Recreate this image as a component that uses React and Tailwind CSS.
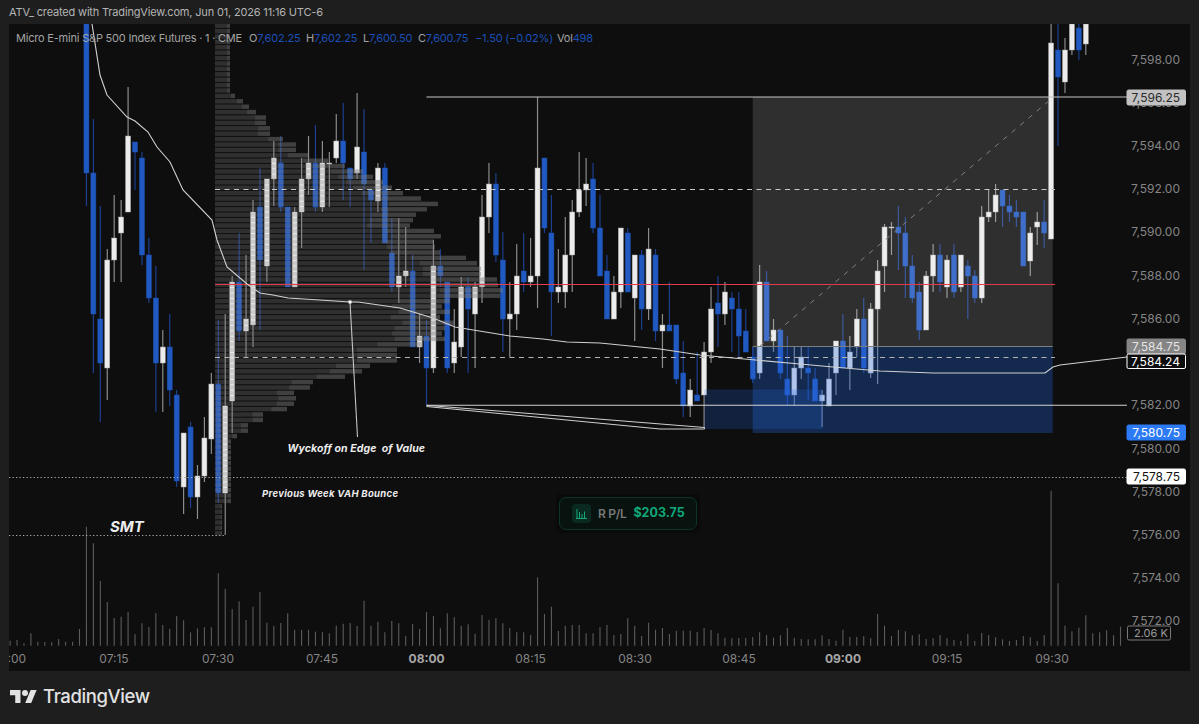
import React from 'react';

const xOf = (i) => 426.5 + 6.94 * i;

// [bar, wick top, body top, body bottom, wick low, colour]
const candles = [
    [-49, 24, 24, 173, 206, 'b'], [-48, 119, 173, 314, 373, 'b'], [-47, 206, 319, 363, 422, 'b'], [-46, 249, 260, 368, 400, 'w'],
    [-45, 195, 238, 260, 282, 'w'], [-44, 200, 217, 233, 282, 'w'], [-43, 87, 136, 212, 212, 'w'], [-42, 142, 142, 152, 190, 'b'],
    [-41, 152, 158, 255, 265, 'b'], [-40, 238, 255, 298, 303, 'b'], [-39, 266, 298, 363, 412, 'b'], [-38, 330, 347, 363, 412, 'w'],
    [-37, 314, 347, 390, 406, 'b'], [-36, 390, 395, 481, 487, 'b'], [-35, 433, 433, 487, 514, 'w'], [-34, 422, 427, 497, 508, 'b'],
    [-33, 465, 476, 497, 519, 'w'], [-32, 417, 438, 476, 482, 'w'], [-31, 373, 384, 439, 454, 'w'], [-30, 320, 384, 493, 503, 'b'],
    [-29, 314, 406, 493, 535, 'w'], [-28, 276, 282, 401, 433, 'w'], [-27, 233, 282, 331, 341, 'b'], [-26, 255, 319, 331, 357, 'w'],
    [-25, 200, 212, 325, 347, 'w'], [-24, 168, 207, 260, 330, 'b'], [-23, 179, 179, 266, 282, 'w'], [-22, 141, 158, 179, 206, 'w'],
    [-21, 136, 163, 207, 212, 'b'], [-20, 207, 207, 287, 287, 'b'], [-19, 207, 212, 287, 287, 'w'], [-18, 158, 179, 212, 248, 'w'],
    [-17, 136, 163, 179, 195, 'w'], [-16, 125, 163, 207, 212, 'b'], [-15, 141, 163, 207, 212, 'w'], [-14, 152, 163, 164, 207, 'w'],
    [-13, 114, 141, 158, 163, 'w'], [-12, 103, 141, 163, 200, 'b'], [-11, 168, 168, 179, 207, 'b'], [-10, 93, 147, 173, 179, 'w'],
    [-9, 109, 152, 184, 270, 'b'], [-8, 190, 190, 200, 243, 'b'], [-7, 163, 168, 201, 212, 'w'], [-6, 163, 168, 243, 243, 'b'],
    [-5, 218, 253, 287, 292, 'b'], [-4, 218, 276, 287, 303, 'w'], [-3, 227, 271, 276, 287, 'w'], [-2, 255, 271, 347, 347, 'b'],
    [-1, 314, 336, 347, 363, 'w'], [0, 320, 336, 368, 405, 'b'], [1, 240, 266, 368, 373, 'w'], [2, 249, 266, 276, 287, 'b'],
    [3, 282, 282, 368, 373, 'b'], [4, 309, 342, 363, 373, 'w'], [5, 277, 287, 347, 357, 'w'], [6, 277, 287, 309, 373, 'b'],
    [7, 282, 287, 314, 368, 'w'], [8, 195, 217, 287, 303, 'w'], [9, 163, 184, 217, 233, 'w'], [10, 173, 184, 255, 262, 'b'],
    [11, 232, 260, 319, 352, 'b'], [12, 282, 314, 319, 357, 'w'], [13, 244, 276, 314, 330, 'w'], [14, 233, 271, 282, 292, 'b'],
    [15, 238, 276, 282, 287, 'w'], [16, 97, 168, 276, 308, 'w'], [17, 158, 158, 228, 233, 'b'], [18, 195, 233, 292, 336, 'b'],
    [19, 249, 287, 292, 303, 'w'], [20, 217, 255, 292, 308, 'w'], [21, 200, 212, 255, 292, 'w'], [22, 152, 190, 212, 217, 'w'],
    [23, 158, 184, 190, 206, 'w'], [24, 163, 179, 228, 233, 'b'], [25, 195, 228, 276, 276, 'b'], [26, 255, 271, 319, 319, 'b'],
    [27, 276, 292, 319, 319, 'w'], [28, 228, 228, 292, 308, 'w'], [29, 228, 233, 292, 292, 'b'], [30, 255, 255, 298, 341, 'w'],
    [31, 250, 255, 309, 330, 'b'], [32, 228, 249, 309, 320, 'w'], [33, 249, 255, 331, 341, 'b'], [34, 314, 325, 331, 368, 'w'],
    [35, 282, 325, 331, 331, 'b'], [36, 325, 325, 379, 384, 'b'], [37, 341, 373, 406, 417, 'b'], [38, 379, 390, 406, 417, 'w'],
    [39, 352, 395, 401, 401, 'b'], [40, 342, 352, 395, 428, 'w'], [41, 287, 309, 352, 363, 'w'], [42, 276, 303, 314, 347, 'b'],
    [43, 282, 292, 314, 325, 'w'], [44, 292, 298, 309, 352, 'b'], [45, 292, 309, 336, 357, 'b'], [46, 309, 331, 352, 352, 'b'],
    [47, 347, 357, 379, 383, 'b'], [48, 265, 282, 373, 379, 'w'], [49, 271, 282, 341, 341, 'b'], [50, 319, 330, 341, 352, 'w'],
    [51, 330, 330, 373, 379, 'b'], [52, 336, 379, 395, 406, 'b'], [53, 347, 368, 395, 406, 'w'], [54, 347, 357, 368, 379, 'w'],
    [55, 347, 368, 373, 400, 'b'], [56, 368, 379, 401, 401, 'b'], [57, 390, 395, 401, 427, 'w'], [58, 363, 379, 406, 406, 'w'],
    [59, 341, 341, 373, 395, 'w'], [60, 314, 341, 368, 368, 'b'], [61, 336, 352, 368, 390, 'w'], [62, 309, 319, 347, 357, 'w'],
    [63, 298, 319, 368, 373, 'b'], [64, 303, 309, 373, 378, 'w'], [65, 260, 271, 309, 384, 'w'], [66, 224, 227, 266, 292, 'w'],
    [67, 222, 227, 228, 255, 'w'], [68, 206, 227, 233, 270, 'b'], [69, 217, 233, 266, 298, 'b'], [70, 255, 266, 298, 303, 'b'],
    [71, 282, 292, 330, 340, 'b'], [72, 271, 276, 330, 330, 'w'], [73, 244, 255, 276, 292, 'w'], [74, 244, 255, 282, 292, 'b'],
    [75, 255, 260, 287, 298, 'w'], [76, 244, 255, 292, 298, 'b'], [77, 255, 255, 287, 292, 'w'], [78, 260, 266, 276, 319, 'b'],
    [79, 270, 276, 298, 303, 'b'], [80, 206, 217, 298, 303, 'w'], [81, 190, 212, 217, 222, 'w'], [82, 184, 195, 212, 222, 'w'],
    [83, 190, 190, 206, 227, 'b'], [84, 195, 206, 212, 222, 'b'], [85, 200, 212, 217, 227, 'b'], [86, 212, 212, 266, 266, 'b'],
    [87, 227, 233, 261, 276, 'w'], [88, 212, 222, 227, 245, 'w'], [89, 200, 222, 233, 248, 'b'], [90, 24, 43, 239, 239, 'w'],
    [91, 24, 50, 77, 146, 'b'], [92, 38, 50, 82, 93, 'w'], [93, 24, 24, 50, 55, 'w'], [94, 24, 28, 50, 60, 'b'],
    [95, 24, 24, 44, 55, 'w'],
];

// right edge of each volume profile row, top to bottom
const profile = [
    230, 230, 230, 230, 230, 230, 230, 230, 230, 230, 230, 230, 230, 235, 243, 249, 256, 266, 266, 270, 270, 283, 296, 296,
    308, 328, 345, 363, 373, 383, 392, 403, 421, 438, 427, 416, 413, 410, 434, 441, 434, 435, 440, 466, 477, 481, 481, 497,
    498, 503, 500, 450, 442, 450, 440, 455, 445, 442, 445, 423, 397, 397, 397, 370, 362, 345, 313, 310, 294, 296, 294, 287,
    263, 263, 248, 248, 237, 231, 231, 231, 231, 231, 231, 231, 231, 231, 231, 231, 231, 222, 222, 222, 222, 222, 222,
];

// top of each volume bar in crop units (y = 480 + top / 3), from bar -60
const volume = [
    482, 480, 490, 460, 485, 486, 487, 477, 485, 485, 447, 140, 190, 303, 366, 414, 410, 396, 463, 430, 441, 400, 435, 446,
    408, 421, 457, 445, 442, 442, 280, 327, 387, 364, 420, 380, 336, 428, 437, 429, 400, 449, 450, 449, 455, 457, 460, 437,
    431, 429, 438, 362, 437, 425, 457, 423, 430,
    468, 432, 447, 396, 408, 445, 400, 412, 437, 433, 461, 405, 420, 415, 430, 444, 457, 457, 465, 292, 402, 380, 453, 437,
    435, 435, 460, 460, 442, 435, 465, 462, 415, 437, 468, 428, 449, 444, 462, 452, 452, 452, 456, 444, 450, 460, 473, 475,
    474, 474, 471, 457, 465, 473, 466, 444, 473,
    477, 478, 478, 466, 477, 482, 449, 471, 471, 469, 475, 402, 437, 468, 450, 454, 466, 463, 477, 475, 465, 475, 480, 483,
    462, 483, 459, 465, 472, 478, 483, 480, 468, 472, 483, 465, 32, 310, 437, 454, 443, 406, 460, 457, 451, 466, 440,
];

const vwap = '92,24 100,75 107,95 127,117 135,121 148,132 157,147 170,162 183,190 212,220 217,240 227,267 247,284 260,293 273,295 288,298 320,300 350,302 358,302 400,308 433,318 455,327 510,336 543,339 567,342 600,343 660,349 700,355 733,358 800,364 833,367 880,371 933,373 1045,373 1053,367 1060,365 1127,357';

const priceTicks = [
    ['7,598.00', 59.5], ['7,596.00', 102.5], ['7,594.00', 145.5], ['7,592.00', 189], ['7,590.00', 232], ['7,588.00', 275.5],
    ['7,586.00', 318.7], ['7,582.00', 405], ['7,580.00', 448.5], ['7,578.00', 491.5], ['7,576.00', 535], ['7,574.00', 578], ['7,572.00', 621],
];

const timeTicks = [
    ['07:00', 10], ['07:15', 114], ['07:30', 218], ['07:45', 322], ['08:00', 426.6, true], ['08:15', 530.6], ['08:30', 635],
    ['08:45', 739], ['09:00', 843, true], ['09:15', 947], ['09:30', 1052],
];

const priceTags = [
    ['7,596.25', 90, 15, '#c2c2c2', '#2a2a2a', '#c2c2c2'],
    ['7,584.75', 339, 15, '#858585', '#e4e4e4', '#858585'],
    ['7,584.24', 354, 14.5, '#0c0c0c', '#ffffff', '#ffffff'],
    ['7,580.75', 425, 15, '#2d7bf4', '#ffffff', '#2d7bf4'],
    ['7,578.75', 469, 15, '#ffffff', '#111111', '#ffffff'],
];

const Candle = ({ bar }) => {
    const [i, high, top, bottom, low, color] = bar;
    const x = xOf(i);
    const up = color === 'w';
    return (
        <g>
            <line x1={x} x2={x} y1={high} y2={low} stroke={up ? '#8c8c8c' : '#1c3f8e'} strokeWidth="1.2" />
            <rect x={x - 2.5} y={top} width="5" height={bottom - top} fill={up ? '#ececec' : '#2159c2'} stroke={up ? '#a8a8a8' : '#1d4ea8'} strokeWidth="0.5" />
        </g>
    );
};

const Chart = () => (
    <svg viewBox="9 24 1181 647" width="1181" height="647" className="block font-['Inter',sans-serif]">
        {/* volume */}
        {volume.map((top, n) => (
            <line key={n} x1={xOf(n - 60)} x2={xOf(n - 60)} y1={480 + top / 3} y2="645.7" stroke="#5c5c5c" strokeWidth="1.1" />
        ))}

        {candles.map((bar) => <Candle key={bar[0]} bar={bar} />)}

        {/* session volume profile */}
        {profile.map((right, n) => {
            const y = 23.5 + n * 5.4;
            const inner = (right - 215) * 0.78;
            return (
                <g key={n}>
                    <rect x="215" y={y} width={inner} height="4.4" fill="rgba(125,125,125,0.3)" />
                    <rect x={215 + inner} y={y} width={right - 215 - inner} height="4.4" fill="rgba(125,125,125,0.46)" />
                </g>
            );
        })}

        {/* long position */}
        <rect x="704.5" y="389.5" width="118" height="39.5" fill="rgba(37,107,230,0.22)" />
        <rect x="752.7" y="97" width="300" height="249.5" fill="rgba(255,255,255,0.137)" />
        <rect x="752.7" y="346.5" width="300" height="86.5" fill="rgba(37,107,230,0.3)" />
        <line x1="752.7" x2="1052.7" y1="346.5" y2="346.5" stroke="#7d7d7d" />
        <line x1="760" y1="346" x2="1050" y2="100" stroke="#808080" strokeDasharray="5 6" />

        {/* levels */}
        <line x1="215" x2="1055" y1="189.5" y2="189.5" stroke="#c8c8c8" strokeDasharray="5 4.5" />
        <line x1="215" x2="1055" y1="357.5" y2="357.5" stroke="#b4b4b4" strokeDasharray="5 4.5" />
        <line x1="215" x2="1055" y1="284.5" y2="284.5" stroke="#e63a4b" />
        <line x1="426.5" x2="1127" y1="97" y2="97" stroke="#c4c4c4" strokeWidth="1.2" />
        <line x1="426.5" x2="1127" y1="405.3" y2="405.3" stroke="#d2d2d2" strokeWidth="1.1" />
        <line x1="9" x2="1127" y1="477.5" y2="477.5" stroke="#a8a8a8" strokeDasharray="1.3 2.2" />
        <line x1="9" x2="225" y1="535.5" y2="535.5" stroke="#a8a8a8" strokeDasharray="1.3 2.2" />
        <polyline points="426.5,405.3 704.5,427.5 704.5,429 660,429 426.5,406.5" fill="none" stroke="#cfcfcf" strokeWidth="1" />

        <polyline points={vwap} fill="none" stroke="#d0d0d0" strokeWidth="1.1" />

        {/* annotations */}
        <line x1="350" y1="302" x2="357.5" y2="437" stroke="#c4c4c4" strokeWidth="1.1" />
        <rect x="348.5" y="300.5" width="3" height="3" fill="#ffffff" />
        <text x="287.5" y="452" fontSize="10.500" letterSpacing="0.1" fontWeight="700" fontStyle="italic" fill="#ececec" className="whitespace-pre">Wyckoff on Edge  of Value</text>
        <text x="262" y="496.500" fontSize="9.500" letterSpacing="0.3" fontWeight="700" fontStyle="italic" fill="#ececec">Previous Week VAH Bounce</text>
        <text x="110" y="531.500" fontSize="15" fontWeight="700" fontStyle="italic" fill="#ececec">SMT</text>

        {/* price scale */}
        {priceTicks.map(([label, y]) => (
            <text key={label} x="1180" y={y + 4.3} textAnchor="end" fontSize="12" fill="#858585">{label}</text>
        ))}
        {priceTags.map(([label, y, h, fill, text, border]) => (
            <g key={label}>
                <rect x="1127" y={y} width="58.5" height={h} rx="1.5" fill={fill} stroke={border} />
                <text x="1180" y={y + h / 2 + 4.3} textAnchor="end" fontSize="12" fill={text}>{label}</text>
            </g>
        ))}
        <rect x="1127.5" y="626" width="43" height="14" rx="1.5" fill="#0e0e0e" stroke="#7a7a7a" />
        <text x="1134" y="637" fontSize="11" fill="#9a9a9a">2.06 K</text>

        {/* time scale */}
        {timeTicks.map(([label, x, bold]) => (
            <text key={label} x={x} y="663.300" textAnchor="middle" fontSize="12" fontWeight={bold ? 700 : 400} fill={bold ? '#a8a8a8' : '#858585'}>{label}</text>
        ))}
    </svg>
);

const Legend = () => (
    <div className="absolute left-[7px] top-[6px] flex text-[11px] leading-4 tracking-[-0.2px] whitespace-nowrap text-[#a3a3a3]">
        <span className="w-[233px]">Micro E-mini S&amp;P 500 Index Futures · 1 · CME</span>
        <span className="w-[57px]">O<span className="text-[#1c4fb8]">7,602.25</span></span>
        <span className="w-[57px]">H<span className="text-[#1c4fb8]">7,602.25</span></span>
        <span className="w-[55px]">L<span className="text-[#1c4fb8]">7,600.50</span></span>
        <span className="w-[57px]">C<span className="text-[#1c4fb8]">7,600.75</span></span>
        <span className="w-[82px] text-[#1c4fb8]">−1.50 (−0.02%)</span>
        <span>Vol<span className="text-[#1c4fb8]">498</span></span>
    </div>
);

const PnlBadge = () => (
    <div className="absolute left-[547px] top-[470px] rounded-sm bg-[#0a0a0a] p-[3px]">
        <div className="flex h-[33px] w-[138px] items-center gap-[7px] rounded-[7px] border border-[#0e3329] bg-[#08130f] pl-3">
            <div className="flex h-[19px] w-[19px] items-center justify-center rounded bg-[#0a2a21]">
                <svg width="11" height="11" viewBox="0 0 11 11" fill="none" stroke="#14a97c" strokeWidth="1">
                    <path d="M1 1v9M3.500 4v6M6 6v4M8.500 3.500v6.500M0 10.500h11" />
                </svg>
            </div>
            <span className="text-[12px] font-semibold tracking-[-0.3px] text-[#7a7a7a]">R P/L</span>
            <span className="text-[12.5px] font-bold text-[#10a878]">$203.75</span>
        </div>
    </div>
);

export default function App() {
    return (
        <div className="flex h-[724px] w-[1199px] flex-col overflow-hidden bg-[#1e1e1e] font-['Inter',sans-serif]">
            <div className="flex h-6 items-center pl-[9px] text-[11px] tracking-[-0.17px] text-[#b4b4b4]">
                ATV_ created with TradingView.com, Jun 01, 2026 11:16 UTC-6
            </div>
            <div className="relative ml-[9px] h-[647px] w-[1181px] bg-[#0e0e0e]">
                <Chart />
                <Legend />
                <PnlBadge />
            </div>
            <div className="flex flex-1 items-center gap-[6px] pb-0.5 pl-[10px]">
                <svg width="27" height="13.500" viewBox="0 4 36 18" fill="#e2e2e2">
                    <path d="M14 22H7V11H0V4h14v18zM28 22h-8l7.500-18h8L28 22z" />
                    <circle cx="20" cy="8" r="4" />
                </svg>
                <span className="text-[18.5px] font-medium tracking-[-0.4px] text-[#e2e2e2]">TradingView</span>
            </div>
        </div>
    );
}
